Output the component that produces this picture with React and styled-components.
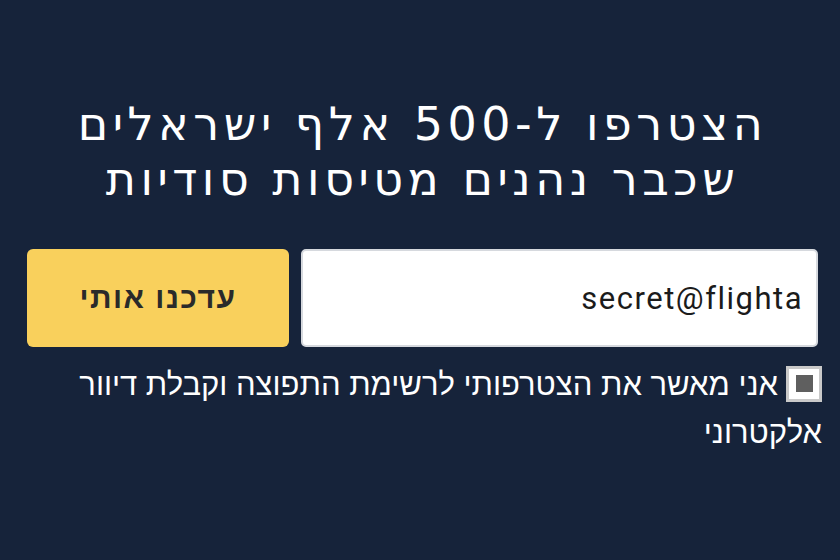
import React from 'react';
import styled, { createGlobalStyle } from 'styled-components';

const GlobalStyle = createGlobalStyle`
  html, body {
    margin: 0;
    padding: 0;
    background: #16233a;
  }
  body {
    font-family: "DejaVu Sans", "Liberation Sans", sans-serif;
  }
`;

const Page = styled.div`
  direction: rtl;
  width: 840px;
  height: 560px;
  box-sizing: border-box;
  padding: 97px 22px 0 27px;
  background: #16233a;
`;

const Title = styled.h1`
  margin: 0 0 42px;
  text-align: center;
  color: #ffffff;
  font-family: "DejaVu Sans", sans-serif;
  font-weight: normal;
  font-size: 46px;
  line-height: 55px;
  letter-spacing: 4.5px;
`;

const Form = styled.form`
  display: flex;
  gap: 12px;
  height: 98px;
`;

const EmailInput = styled.input`
  flex: 1;
  min-width: 0;
  box-sizing: border-box;
  border: 2px solid #d6d9de;
  border-radius: 5px;
  background: #ffffff;
  padding: 0 13px;
  font-family: Roboto, "Liberation Sans", sans-serif;
  font-size: 31px;
  letter-spacing: 1.5px;
  color: #1b1b1b;
  text-align: right;
  direction: ltr;
  outline: none;
`;

const SubmitButton = styled.button`
  width: 262px;
  border: none;
  border-radius: 6px;
  background: #f9d05c;
  color: #2a2a2a;
  font-family: "Liberation Sans", sans-serif;
  font-weight: bold;
  font-size: 30px;
  letter-spacing: 1.5px;
  cursor: pointer;
`;

const Consent = styled.label`
  display: block;
  margin: 14px -4px 0 0;
  color: #ffffff;
  font-family: "Liberation Sans", sans-serif;
  font-size: 31px;
  line-height: 48px;
`;

const Box = styled.span`
  display: inline-flex;
  vertical-align: middle;
  align-items: center;
  justify-content: center;
  width: 36px;
  height: 36px;
  margin: -6px 0 0 8px;
  box-sizing: border-box;
  border: 3px solid #c9c9c9;
  background: #ffffff;
`;

const Tick = styled.span`
  width: 17px;
  height: 17px;
  background: #5f5f5f;
`;

export default function App() {
  return (
    <>
      <GlobalStyle />
      <Page>
        <Title>
          הצטרפו ל-500 אלף ישראלים
          <br />
          שכבר נהנים מטיסות סודיות
        </Title>
        <Form onSubmit={(e) => e.preventDefault()}>
          <EmailInput type="text" defaultValue="secret@flighta" />
          <SubmitButton type="submit">עדכנו אותי</SubmitButton>
        </Form>
        <Consent>
          <Box>
            <Tick />
          </Box>
          אני מאשר את הצטרפותי לרשימת התפוצה וקבלת דיוור אלקטרוני
        </Consent>
      </Page>
    </>
  );
}
